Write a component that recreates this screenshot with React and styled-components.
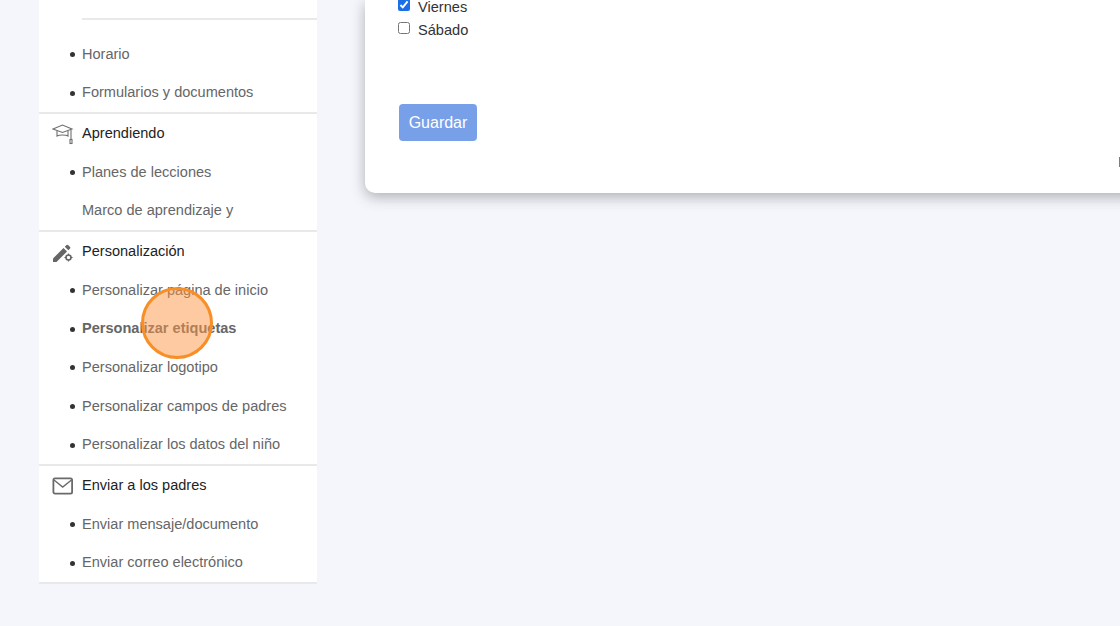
import React from 'react';
import styled, { createGlobalStyle } from 'styled-components';

const sections = [
  {
    title: 'Aprendiendo',
    icon: 'cap',
    items: [{ label: 'Planes de lecciones' }, { label: 'Marco de aprendizaje y', plain: true }],
  },
  {
    title: 'Personalización',
    icon: 'tools',
    items: [
      { label: 'Personalizar página de inicio' },
      { label: 'Personalizar etiquetas', active: true },
      { label: 'Personalizar logotipo' },
      { label: 'Personalizar campos de padres' },
      { label: 'Personalizar los datos del niño' },
    ],
  },
  {
    title: 'Enviar a los padres',
    icon: 'mail',
    items: [{ label: 'Enviar mensaje/documento' }, { label: 'Enviar correo electrónico' }],
  },
];

const CapIcon = () => (
  <svg width="22" height="22" viewBox="0 0 22 22" fill="none" stroke="#6e6e6e" strokeWidth="1.1">
    <path d="M1 6 10.5 2 20 6 10.5 9.5Z" />
    <path d="M5 8v5c2-1.4 9-1.4 11 0V8" />
    <path d="M19 6.5v10" />
    <rect x="18" y="16.5" width="2" height="4" />
  </svg>
);

const ToolsIcon = () => (
  <svg width="22" height="22" viewBox="0 0 22 22" fill="#666">
    <path d="M1 17.5 11.5 7l3.5 3.5L4.5 21H1Z" />
    <path d="M12.8 5.7 14.6 4a1 1 0 0 1 1.4 0l2.1 2.1a1 1 0 0 1 0 1.4l-1.8 1.8Z" />
    <circle cx="16.5" cy="16.5" r="2.5" fill="none" stroke="#666" strokeWidth="1.6" />
    <path d="M15.9 12.4h1.2v2h-1.2ZM15.9 18.6h1.2v2h-1.2ZM12.4 15.9h2v1.2h-2ZM18.6 15.9h2v1.2h-2Z" />
  </svg>
);

const MailIcon = () => (
  <svg width="22" height="22" viewBox="0 0 22 22" fill="none" stroke="#6a6a6a">
    <rect x="1.4" y="3.4" width="18.7" height="15.2" rx="1.6" strokeWidth="1.8" />
    <path d="M2 5 10.7 12.1 19.5 5" strokeWidth="1.4" />
  </svg>
);

const icons = { cap: CapIcon, tools: ToolsIcon, mail: MailIcon };

const App = () => (
  <>
    <GlobalStyle />
    <Page>
      <Sidebar>
        <TopBlock>
          <TopRule />
          <ItemList>
            <Item>Horario</Item>
            <Item>Formularios y documentos</Item>
          </ItemList>
        </TopBlock>
        {sections.map((section) => {
          const Icon = icons[section.icon];
          return (
            <Section key={section.title}>
              <SectionHeader>
                <IconSlot>
                  <Icon />
                </IconSlot>
                {section.title}
              </SectionHeader>
              <ItemList>
                {section.items.map((item) => (
                  <Item key={item.label} $active={item.active} $plain={item.plain}>
                    {item.label}
                  </Item>
                ))}
              </ItemList>
            </Section>
          );
        })}
      </Sidebar>
      <Card>
        <CheckRow>
          <input type="checkbox" defaultChecked />
          Viernes
        </CheckRow>
        <CheckRow>
          <input type="checkbox" />
          Sábado
        </CheckRow>
        <SaveButton type="button">Guardar</SaveButton>
        <EdgeMark />
      </Card>
      <ClickMarker />
    </Page>
  </>
);

export default App;

const GlobalStyle = createGlobalStyle`
  html, body {
    margin: 0;
    padding: 0;
    background: #f4f6fb;
  }
  * {
    box-sizing: border-box;
  }
`;

const Page = styled.div`
  position: relative;
  display: flex;
  align-items: flex-start;
  gap: 48px;
  width: 1120px;
  height: 626px;
  padding-left: 39px;
  overflow: hidden;
  font-family: "Liberation Sans", Arial, sans-serif;
  font-size: 14.55px;
`;

const Sidebar = styled.nav`
  flex: none;
  width: 278px;
  background: #fff;
`;

const TopBlock = styled.div`
  padding-top: 18px;
  border-bottom: 2px solid #e9e9ec;
`;

const TopRule = styled.div`
  height: 2px;
  margin-left: 43px;
  margin-bottom: 14.4px;
  background: #e9e9ec;
`;

const Section = styled.section`
  border-bottom: 2px solid #e9e9ec;
`;

const SectionHeader = styled.div`
  display: flex;
  align-items: center;
  height: 38.7px;
  padding-left: 13px;
  color: #222;
`;

const IconSlot = styled.span`
  display: flex;
  width: 30px;
  margin-top: 2px;
`;

const ItemList = styled.ul`
  margin: 0;
  padding: 0 0 0 43px;
`;

const Item = styled.li`
  display: flex;
  align-items: center;
  position: relative;
  height: 38.67px;
  color: #666;
  font-weight: ${(props) => (props.$active ? 700 : 400)};
  list-style: none;

  &::before {
    content: '';
    display: ${(props) => (props.$plain ? 'none' : 'block')};
    position: absolute;
    left: -12.5px;
    top: 17.5px;
    width: 5px;
    height: 5px;
    border-radius: 50%;
    background: #333;
  }
`;

const Card = styled.main`
  position: relative;
  flex: none;
  width: 800px;
  height: 193px;
  padding: 0 0 0 33px;
  background: #fff;
  border-radius: 0 0 10px 10px;
  box-shadow: 0 4px 14px rgba(60, 60, 70, 0.38);
  color: #333;
  font-size: 14.6px;
`;

const CheckRow = styled.label`
  display: flex;
  align-items: center;
  gap: 8px;
  height: 23px;
  margin-top: -5px;
  margin-bottom: 5px;

  input {
    width: 12px;
    height: 12px;
    margin: -3px 0 0;
    accent-color: #1a6ee8;
  }
`;

const SaveButton = styled.button`
  display: block;
  width: 78px;
  height: 37px;
  margin: 63px 0 0 1px;
  padding: 0;
  border: 0;
  border-radius: 4px;
  background: #78a0e9;
  color: #fff;
  font-family: inherit;
  font-size: 16px;
`;

const EdgeMark = styled.span`
  position: absolute;
  left: 754px;
  top: 157px;
  width: 1px;
  height: 10px;
  background: #8a7a72;
`;

const ClickMarker = styled.div`
  position: absolute;
  left: 141px;
  top: 287px;
  width: 72px;
  height: 72px;
  border-radius: 50%;
  border: 3px solid #f78f26;
  background: rgba(251, 150, 70, 0.5);
`;
